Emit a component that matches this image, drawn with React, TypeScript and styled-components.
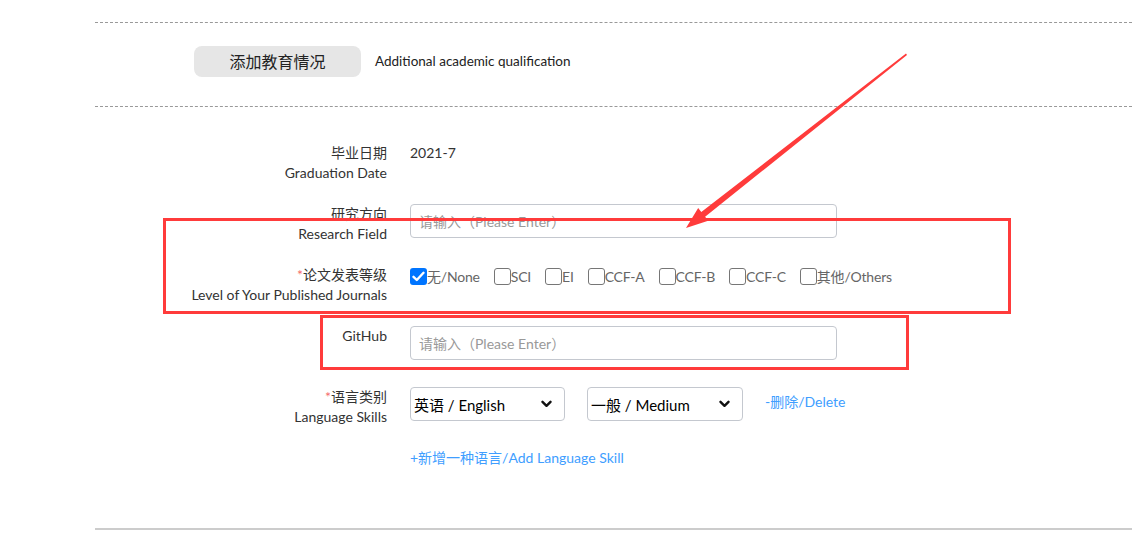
import React from "react";
import styled, { createGlobalStyle } from "styled-components";

const Global = createGlobalStyle`
  html, body { margin: 0; padding: 0; background: #fff; }
  body { font-family: "Lato", "Noto Sans CJK SC", sans-serif; color: #333; }
  * { box-sizing: border-box; }
`;

const Page = styled.div`
  position: relative;
  width: 1132px;
  height: 533px;
  overflow: hidden;
  padding-left: 95px;
  padding-top: 22px;
`;

const Dashed = styled.div`
  height: 0;
  border-top: 1px dashed #999;
`;

const AddBar = styled.div`
  display: flex;
  align-items: flex-start;
  height: 83px;
  padding-left: 99px;
  padding-top: 23px;
  gap: 14px;
`;

const GreyButton = styled.button`
  width: 167px;
  height: 31px;
  border: none;
  border-radius: 8px;
  background: #e6e6e6;
  font-family: "Noto Sans CJK SC", sans-serif;
  font-size: 16px;
  line-height: 30px;
  color: #222;
  padding: 0 0 1px;
`;

const Hint = styled.span`
  font-size: 13.5px;
  line-height: 31px;
  color: #222;
`;

const Form = styled.div`
  display: flex;
  flex-direction: column;
  gap: 21px;
  padding-top: 36px;
`;

const Row = styled.div<{ $short?: boolean }>`
  display: grid;
  grid-template-columns: 292px 1fr;
  column-gap: 23px;
  min-height: ${(p) => (p.$short ? 20 : 40)}px;
`;

const Label = styled.div`
  text-align: right;
  font-size: 14px;
  line-height: 20px;
  color: #333;
`;

const Star = styled.span`
  color: #f56c6c;
`;

const Value = styled.div`
  font-size: 14px;
  line-height: 20px;
  color: #333;
`;

const Input = styled.div`
  width: 427px;
  height: 34px;
  border: 1px solid #c4c8cf;
  border-radius: 4px;
  display: flex;
  align-items: center;
  padding-left: 8px;
  font-size: 14px;
  color: #999;
`;

const Checks = styled.div`
  display: flex;
  align-items: center;
  height: 22px;
`;

const CheckItem = styled.label`
  display: flex;
  align-items: center;
  margin-right: 14px;
  font-size: 14px;
  letter-spacing: -0.2px;
  color: #666;
`;

const Box = styled.span<{ $on?: boolean }>`
  width: 17px;
  height: 17px;
  border-radius: 3px;
  border: ${(p) => (p.$on ? "none" : "1px solid #767676")};
  background: ${(p) => (p.$on ? "#0075ff" : "#fff")};
  display: inline-flex;
  align-items: center;
  justify-content: center;
`;

const Selects = styled.div`
  display: flex;
  align-items: flex-start;
  gap: 22px;
`;

const Select = styled.div<{ $w: number }>`
  width: ${(p) => p.$w}px;
  height: 34px;
  border: 1px solid #c4c8cf;
  border-radius: 4px;
  display: flex;
  align-items: center;
  justify-content: space-between;
  padding: 0 12px 0 3px;
  font-size: 15px;
  color: #000;
`;

const Link = styled.span`
  color: #409eff;
  font-size: 14px;
  line-height: 20px;
  margin-top: 5px;
`;

const AddLink = styled.span`
  color: #409eff;
  font-size: 14px;
  line-height: 20px;
`;

const Bottom = styled.div`
  margin-top: 60px;
  height: 2px;
  background: #ccc;
`;

const Annot = styled.div<{ $x: number; $y: number; $w: number; $h: number }>`
  position: absolute;
  left: ${(p) => p.$x}px;
  top: ${(p) => p.$y}px;
  width: ${(p) => p.$w}px;
  height: ${(p) => p.$h}px;
  border: 3px solid #ff3b3b;
  pointer-events: none;
`;

const Arrow = styled.svg`
  position: absolute;
  left: 0;
  top: 0;
  pointer-events: none;
`;

const Chevron = () => (
  <svg width="11" height="8" viewBox="0 0 11 8">
    <path d="M1.5 1.8 L5.5 5.8 L9.5 1.8" fill="none" stroke="#111" strokeWidth="2.4" strokeLinecap="round" strokeLinejoin="round" />
  </svg>
);

const Tick = () => (
  <svg width="13" height="11" viewBox="0 0 13 11">
    <path d="M1.5 5.8 L4.8 9 L11.5 1.8" fill="none" stroke="#fff" strokeWidth="2.4" strokeLinecap="round" strokeLinejoin="round" />
  </svg>
);

const options = ["SCI", "EI", "CCF-A", "CCF-B", "CCF-C", "其他/Others"];

export default function App() {
  return (
    <Page>
      <Global />
      <Dashed />
      <AddBar>
        <GreyButton>添加教育情况</GreyButton>
        <Hint>Additional academic qualification</Hint>
      </AddBar>
      <Dashed />
      <Form>
        <Row>
          <Label>
            毕业日期
            <br />
            Graduation Date
          </Label>
          <Value>2021-7</Value>
        </Row>
        <Row>
          <Label>
            研究方向
            <br />
            Research Field
          </Label>
          <Input>请输入（Please Enter）</Input>
        </Row>
        <Row>
          <Label>
            <Star>*</Star>论文发表等级
            <br />
            Level of Your Published Journals
          </Label>
          <Checks>
            <CheckItem>
              <Box $on>
                <Tick />
              </Box>
              无/None
            </CheckItem>
            {options.map((o) => (
              <CheckItem key={o}>
                <Box />
                {o}
              </CheckItem>
            ))}
          </Checks>
        </Row>
        <Row>
          <Label>GitHub</Label>
          <Input>请输入（Please Enter）</Input>
        </Row>
        <Row>
          <Label>
            <Star>*</Star>语言类别
            <br />
            Language Skills
          </Label>
          <Selects>
            <Select $w={155}>
              英语 / English
              <Chevron />
            </Select>
            <Select $w={156}>
              一般 / Medium
              <Chevron />
            </Select>
            <Link>-删除/Delete</Link>
          </Selects>
        </Row>
        <Row $short>
          <span />
          <AddLink>+新增一种语言/Add Language Skill</AddLink>
        </Row>
      </Form>
      <Bottom />
      <Annot $x={163} $y={218} $w={848} $h={96} />
      <Annot $x={320} $y={315} $w={589} $h={55} />
      <Arrow width="1132" height="533" viewBox="0 0 1132 533">
        <polygon
          points="906,53.5 907,55 705.1,216.8 708.2,220.7 686,228 698.2,208.1 701.3,212"
          fill="#ff3b3b"
        />
      </Arrow>
    </Page>
  );
}
